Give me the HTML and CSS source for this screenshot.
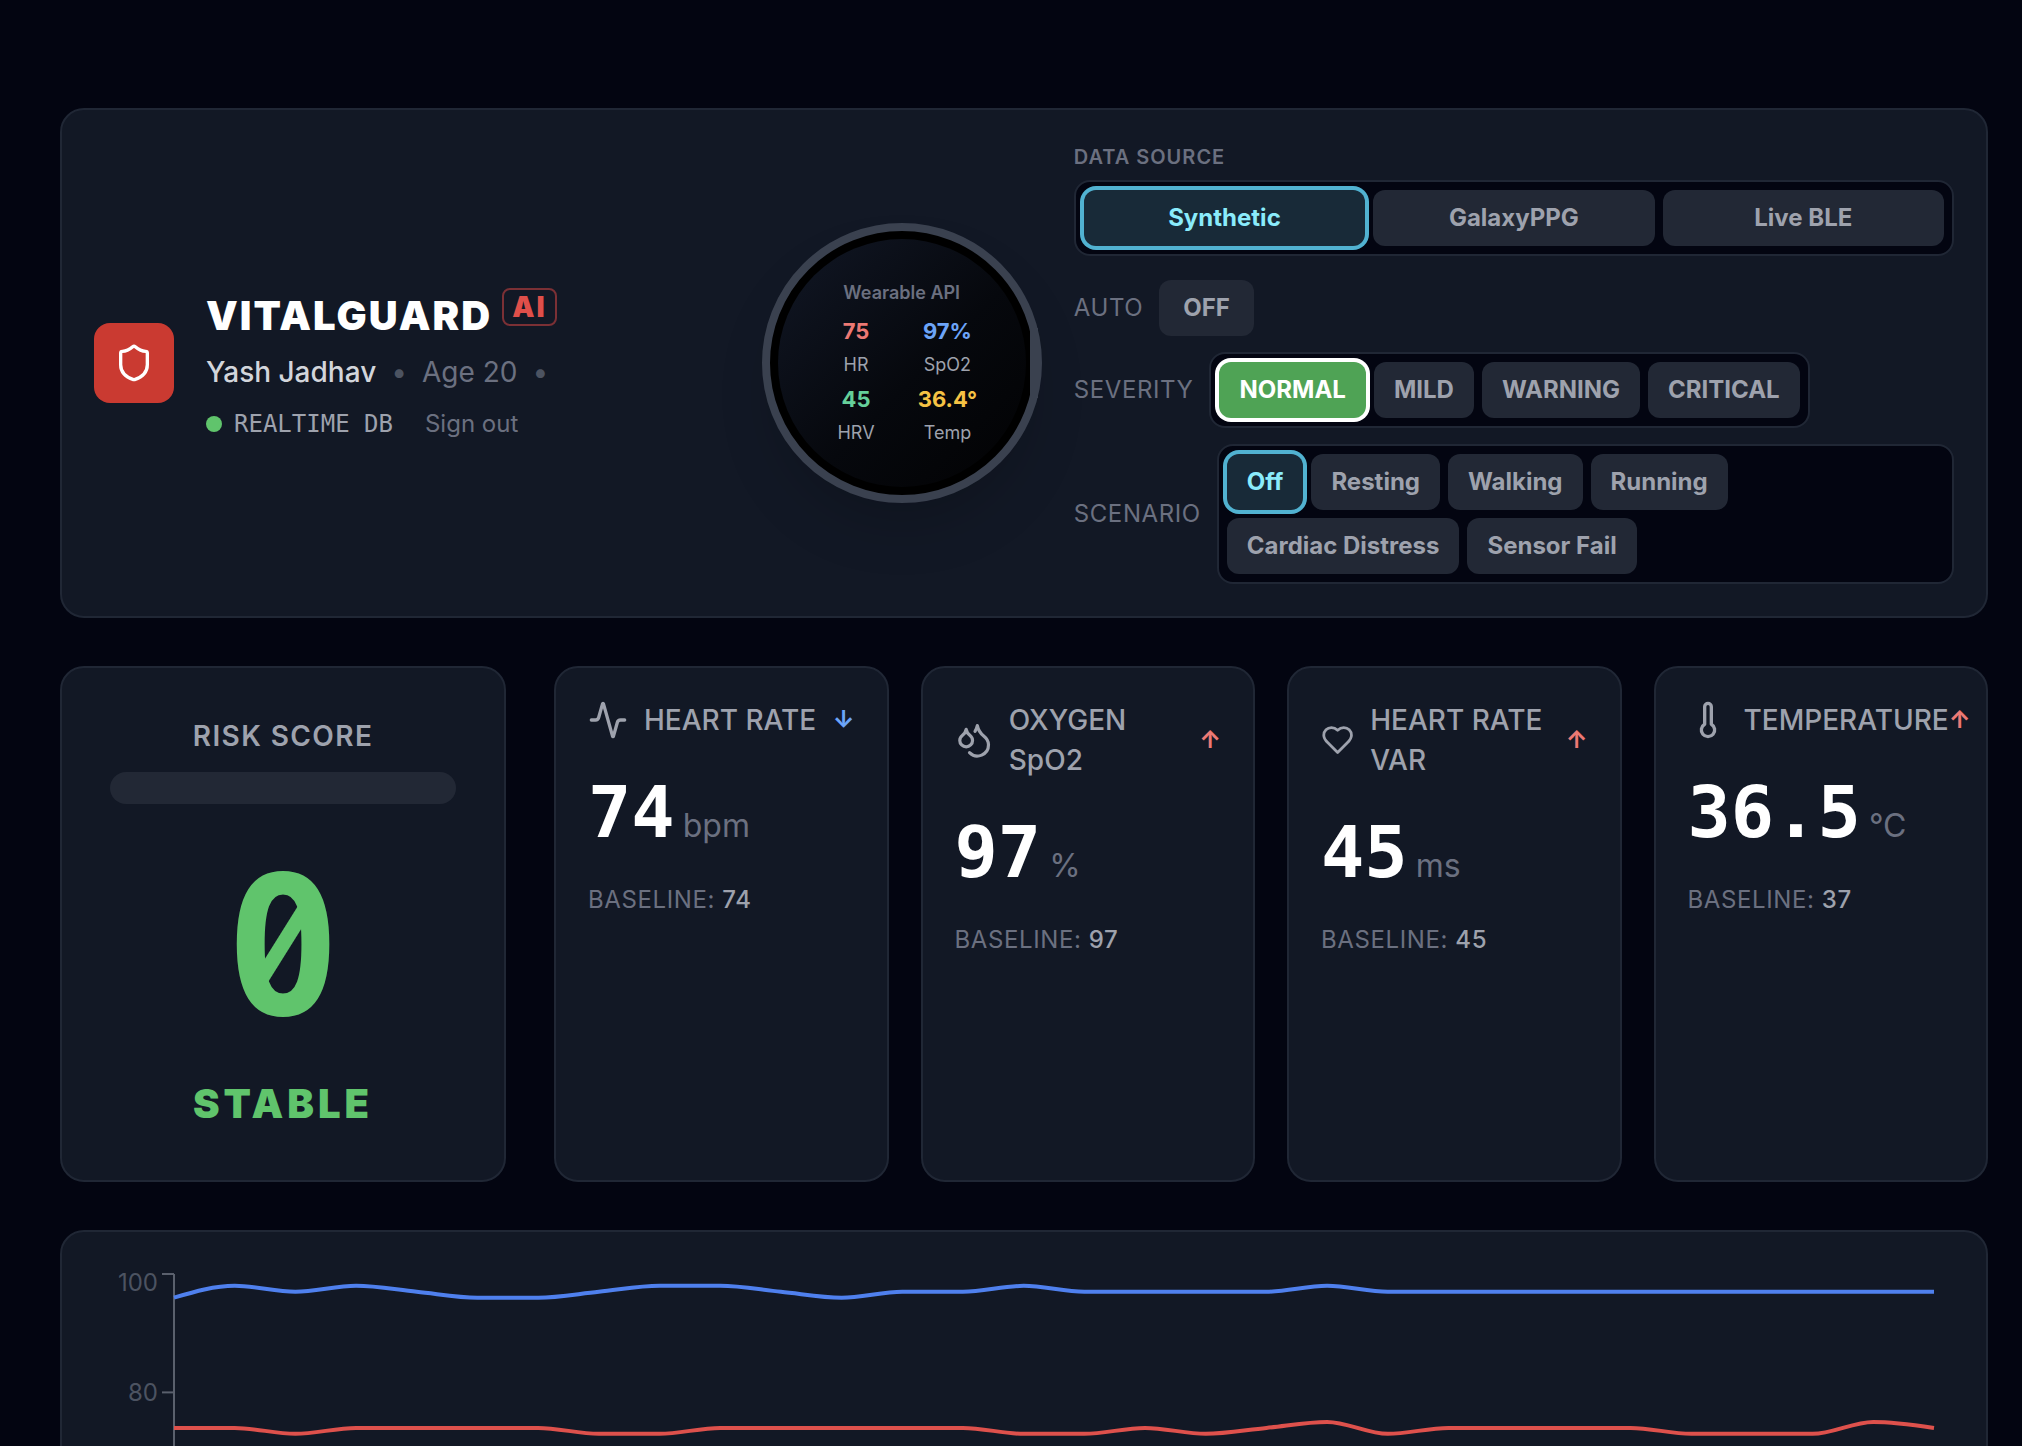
FILE: index.html
```html
<!DOCTYPE html>
<html lang="en">
<head>
    <meta charset="UTF-8">
    <meta name="viewport" content="width=device-width, initial-scale=1.0">
    <title>VitalGuard AI</title>
    <link rel="stylesheet" href="styles.css">
</head>
<body>
    <main class="dashboard">
        <header class="card header">
            <div class="brand">
                <div class="logo">
                    <svg width="40" height="40" viewBox="0 0 24 24" class="icon"><path d="M20 13c0 5-3.5 7.5-7.66 8.95a1 1 0 0 1-.67-.01C7.5 20.5 4 18 4 13V6a1 1 0 0 1 1-1c2 0 4.5-1.2 6.24-2.72a1.17 1.17 0 0 1 1.52 0C14.51 3.81 17 5 19 5a1 1 0 0 1 1 1z"/></svg>
                </div>
                <div class="brand-text">
                    <h1>VITALGUARD <span class="ai-badge">AI</span></h1>
                    <p class="patient"><span class="name">Yash Jadhav</span><span class="sep">•</span><span>Age 20</span><span class="sep">•</span></p>
                    <div class="session">
                        <span class="dot"></span>
                        <span class="db">REALTIME DB</span>
                        <button class="sign-out">Sign out</button>
                    </div>
                </div>
            </div>

            <div class="watch">
                <div class="watch-face">
                    <p class="watch-title">Wearable API</p>
                    <div class="watch-grid">
                        <div><b class="hr">75</b><span>HR</span></div>
                        <div><b class="spo2">97%</b><span>SpO2</span></div>
                        <div><b class="hrv">45</b><span>HRV</span></div>
                        <div><b class="temp">36.4°</b><span>Temp</span></div>
                    </div>
                </div>
                <div class="crown"></div>
            </div>

            <div class="controls">
                <div class="source">
                    <p class="source-label">DATA SOURCE</p>
                    <div class="group fill">
                        <button class="btn active">Synthetic</button>
                        <button class="btn">GalaxyPPG</button>
                        <button class="btn">Live BLE</button>
                    </div>
                </div>
                <div class="control-rows">
                    <div class="control-row">
                        <span class="control-label">AUTO</span>
                        <button class="btn wide">OFF</button>
                    </div>
                    <div class="control-row">
                        <span class="control-label">SEVERITY</span>
                        <div class="group">
                            <button class="btn normal">NORMAL</button>
                            <button class="btn">MILD</button>
                            <button class="btn">WARNING</button>
                            <button class="btn">CRITICAL</button>
                        </div>
                    </div>
                    <div class="control-row">
                        <span class="control-label">SCENARIO</span>
                        <div class="group grow">
                            <button class="btn active">Off</button>
                            <button class="btn">Resting</button>
                            <button class="btn">Walking</button>
                            <button class="btn">Running</button>
                            <button class="btn">Cardiac Distress</button>
                            <button class="btn">Sensor Fail</button>
                        </div>
                    </div>
                </div>
            </div>
        </header>

        <section class="overview">
            <div class="card risk">
                <h2>RISK SCORE</h2>
                <div class="risk-bar"></div>
                <div class="risk-value"><span class="zero">0</span></div>
                <div class="risk-status">STABLE</div>
            </div>

            <div class="vitals">
                <div class="card vital">
                    <div class="vital-head">
                        <div class="vital-name">
                            <svg width="40" height="40" viewBox="0 0 24 24" class="icon"><path d="M22 12h-2.48a2 2 0 0 0-1.93 1.46l-2.35 8.36a.25.25 0 0 1-.48 0L9.24 2.18a.25.25 0 0 0-.48 0l-2.35 8.36A2 2 0 0 1 4.49 12H2"/></svg>
                            <h3>HEART RATE</h3>
                        </div>
                        <span class="trend down">↓</span>
                    </div>
                    <p class="reading"><strong>74</strong><span>bpm</span></p>
                    <p class="baseline">BASELINE: <span>74</span></p>
                </div>
                <div class="card vital">
                    <div class="vital-head">
                        <div class="vital-name">
                            <svg width="40" height="40" viewBox="0 0 24 24" class="icon"><path d="M7 16.3c2.2 0 4-1.83 4-4.05 0-1.16-.57-2.26-1.71-3.19S7.29 6.75 7 5.3c-.29 1.45-1.14 2.84-2.29 3.76S3 11.1 3 12.25c0 2.22 1.8 4.05 4 4.05z"/><path d="M12.56 6.6A10.97 10.97 0 0 0 14 3.02c.5 2.5 2 4.9 4 6.5s3 3.5 3 5.5a6.98 6.98 0 0 1-11.91 4.97"/></svg>
                            <h3>OXYGEN SpO2</h3>
                        </div>
                        <span class="trend up">↑</span>
                    </div>
                    <p class="reading"><strong>97</strong><span>%</span></p>
                    <p class="baseline">BASELINE: <span>97</span></p>
                </div>
                <div class="card vital">
                    <div class="vital-head">
                        <div class="vital-name">
                            <svg width="40" height="40" viewBox="0 0 24 24" class="icon"><path d="M19 14c1.49-1.46 3-3.21 3-5.5A5.5 5.5 0 0 0 16.5 3c-1.76 0-3 .5-4.5 2-1.5-1.5-2.74-2-4.5-2A5.5 5.5 0 0 0 2 8.5c0 2.3 1.5 4.05 3 5.5l7 7Z"/></svg>
                            <h3>HEART RATE VAR</h3>
                        </div>
                        <span class="trend up">↑</span>
                    </div>
                    <p class="reading"><strong>45</strong><span>ms</span></p>
                    <p class="baseline">BASELINE: <span>45</span></p>
                </div>
                <div class="card vital">
                    <div class="vital-head">
                        <div class="vital-name">
                            <svg width="40" height="40" viewBox="0 0 24 24" class="icon rigid"><path d="M14 4v10.54a4 4 0 1 1-4 0V4a2 2 0 0 1 4 0Z"/></svg>
                            <h3>TEMPERATURE</h3>
                        </div>
                        <span class="trend up">↑</span>
                    </div>
                    <p class="reading"><strong>36.5</strong><span>°C</span></p>
                    <p class="baseline">BASELINE: <span>37</span></p>
                </div>
            </div>
        </section>

        <section class="card chart-card">
            <svg id="chart" class="chart"></svg>
        </section>
    </main>

    <script>
        const spo2 = [96, 98, 97, 98, 97, 96, 96, 97, 98, 98, 97, 96, 97, 97, 98, 97, 97, 97, 97, 98, 97, 97, 97, 97, 97, 97, 97, 97, 97, 97];
        const heartRate = [74, 74, 73, 74, 74, 74, 74, 73, 73, 74, 74, 74, 74, 74, 73, 73, 74, 73, 74, 75, 73, 74, 74, 74, 74, 73, 73, 73, 75, 74];

        const chart = document.getElementById('chart');
        const axisX = 80;
        const plotTop = 10;
        const plotHeight = 592;

        function yFor(value) {
            return plotTop + (100 - value) * plotHeight / 100;
        }

        // Smooth line that never overshoots its points
        function linePath(values, width) {
            const step = (width - axisX - 20) / (values.length - 1);
            const ys = values.map(yFor);
            const last = ys.length - 1;
            const slopes = ys.map((y, i) => {
                if (i === 0 || i === last) return 0;
                const a = (y - ys[i - 1]) / step;
                const b = (ys[i + 1] - y) / step;
                return a * b <= 0 ? 0 : Math.sign(a) * Math.min(Math.abs(a), Math.abs(b));
            });
            slopes[0] = (3 * (ys[1] - ys[0]) / step - slopes[1]) / 2;
            slopes[last] = (3 * (ys[last] - ys[last - 1]) / step - slopes[last - 1]) / 2;

            let d = `M${axisX},${ys[0]}`;
            for (let i = 1; i < ys.length; i++) {
                const x = axisX + step * i;
                d += `C${x - step * 2 / 3},${ys[i - 1] + slopes[i - 1] * step / 3} ${x - step / 3},${ys[i] - slopes[i] * step / 3} ${x},${ys[i]}`;
            }
            return d;
        }

        function drawChart() {
            const width = chart.clientWidth;
            let html = `<path class="axis" d="M${axisX},${plotTop}V${plotTop + plotHeight}"/>`;
            [100, 80].forEach(tick => {
                const y = yFor(tick);
                html += `<path class="axis" d="M${axisX - 12},${y}H${axisX}"/>`;
                html += `<text x="${axisX - 16}" y="${Math.max(y + 9, 27)}">${tick}</text>`;
            });
            html += `<path class="line spo2-line" d="${linePath(spo2, width)}"/>`;
            html += `<path class="line hr-line" d="${linePath(heartRate, width)}"/>`;
            chart.innerHTML = html;
        }

        drawChart();
        window.addEventListener('resize', drawChart);
    </script>
</body>
</html>
```
FILE: styles.css
```css
* {
    box-sizing: border-box;
    margin: 0;
    padding: 0;
}

body {
    font-family: 'Inter', sans-serif;
    background: #030511;
    color: white;
    font-size: 24px;
    line-height: 32px;
}

button {
    font-family: inherit;
    border: none;
    cursor: pointer;
}

.dashboard {
    display: flex;
    flex-direction: column;
    gap: 48px;
    padding: 108px 34px 48px 60px;
}

.card {
    background: #121825;
    border: 2px solid #202735;
    border-radius: 24px;
}

.icon {
    fill: none;
    stroke: currentColor;
    stroke-width: 2;
    stroke-linecap: round;
    stroke-linejoin: round;
}

/* Header */
.header {
    display: grid;
    grid-template-columns: 13fr auto 18fr;
    align-items: center;
    gap: 32px;
    padding: 32px;
}

.brand {
    display: flex;
    align-items: center;
    gap: 32px;
}

.brand-text {
    padding-top: 2px;
}

.logo {
    display: flex;
    align-items: center;
    justify-content: center;
    width: 80px;
    height: 80px;
    border-radius: 16px;
    background: #ca3a31;
}

.brand h1 {
    display: flex;
    align-items: flex-start;
    gap: 10px;
    font-size: 40px;
    line-height: 56px;
    font-weight: 900;
    letter-spacing: 2px;
}

.ai-badge {
    padding: 0 8px;
    border: 2px solid #7b3035;
    border-radius: 8px;
    color: #df4f4a;
    font-size: 28px;
    line-height: 34px;
}

.patient {
    display: flex;
    gap: 15px;
    margin: 8px 0 16px;
    color: #6b7080;
    font-size: 28px;
    line-height: 40px;
}

.patient .name {
    color: #d2d5db;
    font-weight: 500;
}

.patient .sep {
    color: #4c5361;
}

.session {
    display: flex;
    align-items: center;
    gap: 12px;
}

.dot {
    width: 16px;
    height: 16px;
    border-radius: 50%;
    background: #60c46c;
}

.db {
    color: #9ea2ad;
    font-family: 'DejaVu Sans Mono', monospace;
}

.sign-out {
    margin-left: 20px;
    background: none;
    color: #6b7080;
    font-size: 24px;
    line-height: 32px;
}

/* Watch */
.watch {
    position: relative;
    width: 280px;
    height: 280px;
    padding: 8px;
    border: 8px solid #3a414f;
    border-radius: 50%;
    background: black;
    box-shadow: 0 32px 64px -24px rgba(0, 0, 0, 0.25);
}

.watch-face {
    display: flex;
    flex-direction: column;
    align-items: center;
    justify-content: center;
    height: 100%;
    border-radius: 50%;
    background: linear-gradient(135deg, #111725, #06080d 55%, #020203);
    font-size: 18px;
    line-height: 34px;
}

.watch-title {
    margin-bottom: 4px;
    color: #6b7080;
    font-weight: 600;
}

.watch-grid {
    display: grid;
    grid-template-columns: 1fr 1fr;
    column-gap: 32px;
    color: #9ea2ad;
    text-align: center;
}

.watch-grid b {
    display: block;
    font-size: 22px;
}

.watch-grid span {
    display: block;
}

.hr {
    color: #ec7974;
}

.spo2 {
    color: #6ca4f8;
}

.hrv {
    color: #65d09a;
}

.temp {
    color: #f5c244;
}

.crown {
    position: absolute;
    top: 50%;
    right: -4px;
    width: 8px;
    height: 70px;
    transform: translateY(-50%);
    background: #3a414f;
}

/* Controls */
.controls {
    display: flex;
    flex-direction: column;
    gap: 24px;
}

.source-label {
    margin-bottom: 8px;
    color: #6b7080;
    font-size: 20px;
    line-height: 30px;
    font-weight: 600;
    letter-spacing: 1px;
}

.control-rows {
    display: flex;
    flex-direction: column;
    gap: 16px;
}

.control-row {
    display: flex;
    align-items: center;
    gap: 16px;
}

.control-label {
    color: #6b7080;
    letter-spacing: 0.025em;
}

.group {
    display: flex;
    flex-wrap: wrap;
    gap: 8px;
    padding: 8px;
    border: 2px solid #202735;
    border-radius: 16px;
    background: #030511;
}

.group.grow,
.group.fill .btn {
    flex: 1;
}

.btn {
    padding: 12px 20px;
    border-radius: 12px;
    background: #222835;
    color: #9ea2ad;
    font-size: 24px;
    line-height: 32px;
    font-weight: 700;
}

.btn.wide {
    padding: 12px 24px;
}

.btn.active {
    background: #182a38;
    color: #8aebfb;
    box-shadow: 0 0 0 4px #51b2d1;
}

.btn.normal {
    background: #4fa355;
    color: white;
    box-shadow: 0 0 0 4px white;
}

/* Risk score */
.overview {
    display: grid;
    grid-template-columns: repeat(4, 1fr);
    gap: 48px;
}

.risk {
    padding: 48px;
    text-align: center;
}

.risk h2 {
    margin-bottom: 16px;
    color: #9ea2ad;
    font-size: 28px;
    line-height: 40px;
    font-weight: 600;
    letter-spacing: 0.05em;
}

.risk-bar {
    height: 32px;
    margin-bottom: 48px;
    border-radius: 16px;
    background: #222835;
}

.risk-value {
    margin-bottom: 32px;
    color: #60c46c;
    font-family: 'DejaVu Sans Mono', monospace;
    font-size: 192px;
    line-height: 192px;
    font-weight: 700;
}

.zero {
    display: inline-block;
    position: relative;
}

/* slashed zero: hides the dot and draws a diagonal bar across the counter */
.zero::after {
    content: '';
    position: absolute;
    top: 43px;
    left: 50%;
    width: 42px;
    height: 98px;
    transform: translateX(-50%);
    background:
        linear-gradient(122deg, transparent calc(50% - 8px), #60c46c calc(50% - 7px), #60c46c calc(50% + 7px), transparent calc(50% + 8px)),
        radial-gradient(circle, #121825 15px, transparent 16px);
}

.risk-status {
    color: #60c46c;
    font-size: 40px;
    line-height: 56px;
    font-weight: 900;
    letter-spacing: 4px;
}

/* Vitals */
.vitals {
    grid-column: span 3;
    display: grid;
    grid-template-columns: repeat(4, minmax(0, 1fr));
    gap: 32px;
}

.vital {
    padding: 32px;
}

.vital-head {
    display: flex;
    align-items: center;
    justify-content: space-between;
    margin-bottom: 32px;
    color: #9ea2ad;
}

.vital-name {
    display: flex;
    align-items: center;
    gap: 16px;
}

.vital-name .icon {
    min-width: 0;
}

.vital-name .rigid {
    flex-shrink: 0;
}

.vital-name h3 {
    font-size: 28px;
    line-height: 40px;
    font-weight: 500;
}

.trend {
    font-size: 24px;
    line-height: 32px;
    font-weight: 700;
}

.trend.up {
    color: #ec7974;
}

.trend.down {
    color: #6ca4f8;
}

.reading {
    display: flex;
    align-items: baseline;
    gap: 8px;
    margin-bottom: 32px;
    line-height: 80px;
}

.reading strong {
    font-family: 'DejaVu Sans Mono', monospace;
    font-size: 72px;
}

.reading span {
    color: #6b7080;
    font-size: 32px;
    line-height: 48px;
}

.baseline {
    color: #6b7080;
    letter-spacing: 0.025em;
}

.baseline span {
    color: #9ea2ad;
    font-weight: 500;
}

/* Chart */
.chart-card {
    padding: 32px;
}

.chart {
    display: block;
    width: 100%;
    height: 640px;
}

.chart text {
    fill: #4c5361;
    font-size: 24px;
    text-anchor: end;
}

.axis {
    fill: none;
    stroke: #5a606d;
    stroke-width: 2;
}

.line {
    fill: none;
    stroke-width: 4;
}

.spo2-line {
    stroke: #4f80ee;
}

.hr-line {
    stroke: #de514c;
}
```
